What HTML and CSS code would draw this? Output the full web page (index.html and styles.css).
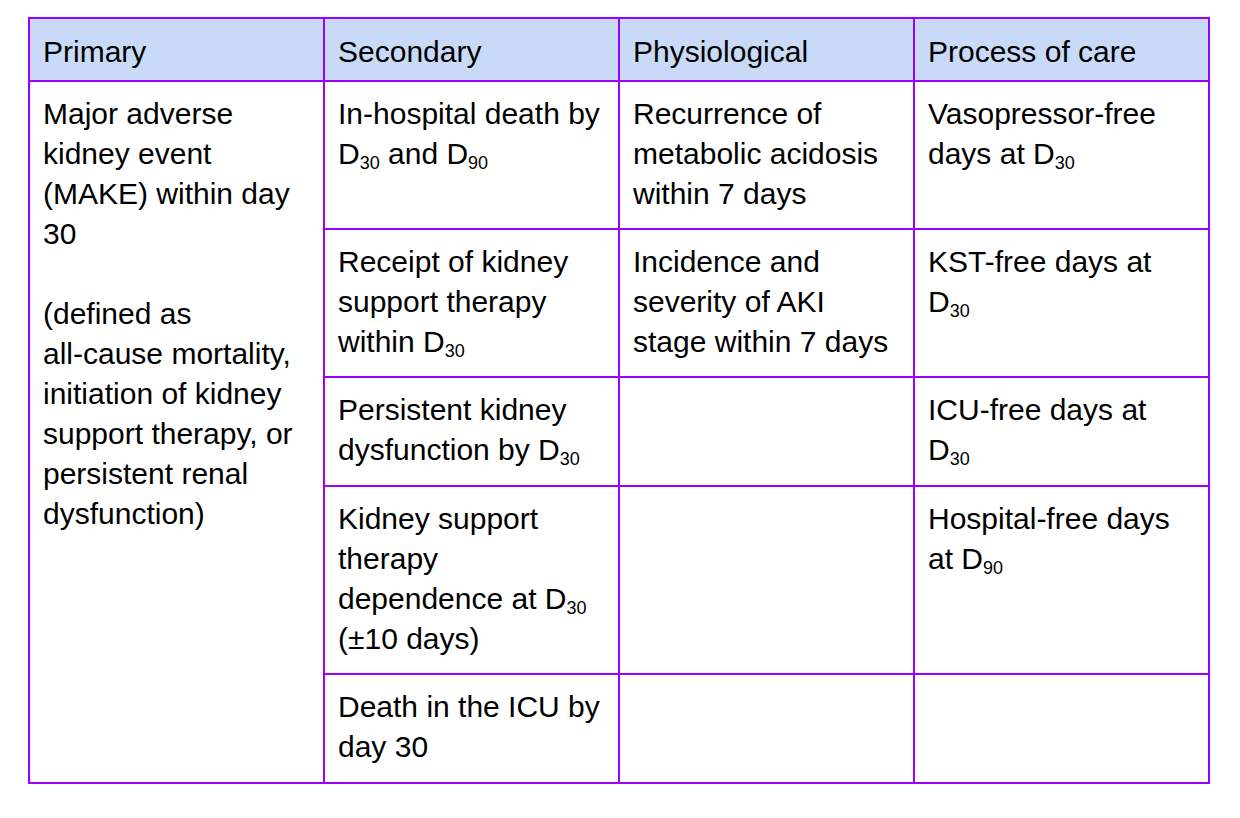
FILE: index.html
```html
<!DOCTYPE html>
<html lang="en">
<head>
<meta charset="utf-8">
<title>Outcomes</title>
<link rel="stylesheet" href="styles.css">
</head>
<body>
<table class="outcomes">
  <thead>
    <tr class="r-head">
      <th>Primary</th>
      <th>Secondary</th>
      <th>Physiological</th>
      <th>Process of care</th>
    </tr>
  </thead>
  <tbody>
    <tr class="r1">
      <td rowspan="5">
        <div>Major adverse kidney event (MAKE) within day 30</div>
        <div class="para">(defined as <span class="nowrap">all-cause</span> mortality, initiation of kidney support therapy, or persistent renal dysfunction)</div>
      </td>
      <td>In-hospital death by D<sub class="sub">30</sub> and D<sub class="sub">90</sub></td>
      <td>Recurrence of metabolic acidosis within 7 days</td>
      <td>Vasopressor-free days at D<sub class="sub">30</sub></td>
    </tr>
    <tr class="r2">
      <td>Receipt of kidney support therapy within D<sub class="sub">30</sub></td>
      <td>Incidence and severity of AKI stage within 7 days</td>
      <td>KST-free days at D<sub class="sub">30</sub></td>
    </tr>
    <tr class="r3">
      <td>Persistent kidney dysfunction by D<sub class="sub">30</sub></td>
      <td></td>
      <td>ICU-free days at D<sub class="sub">30</sub></td>
    </tr>
    <tr class="r4">
      <td>Kidney support therapy dependence at D<sub class="sub">30</sub> (±10 days)</td>
      <td></td>
      <td>Hospital-free days at D<sub class="sub">90</sub></td>
    </tr>
    <tr class="r5">
      <td>Death in the ICU by day 30</td>
      <td></td>
      <td></td>
    </tr>
  </tbody>
</table>
</body>
</html>
```
FILE: styles.css
```css
html, body {
  margin: 0;
  padding: 0;
  background: #ffffff;
}
body {
  padding: 17px 0 0 28px;
  font-family: "Liberation Sans", Arial, Helvetica, sans-serif;
  color: #000000;
}
.outcomes {
  border-collapse: separate;
  border-spacing: 0;
  table-layout: fixed;
  width: 1182px;
  border-top: 2px solid #9900ff;
  border-left: 2px solid #9900ff;
  font-size: 30px;
  line-height: 40px;
}
.outcomes th,
.outcomes td {
  border-right: 2px solid #9900ff;
  border-bottom: 2px solid #9900ff;
  vertical-align: top;
  text-align: left;
  font-weight: normal;
  padding: 12px 15px 0 13px;
  box-sizing: border-box;
}
.outcomes th {
  background: #c9daf8;
  padding-top: 13px;
}
.r-head { height: 63px; }
.r1 { height: 148px; }
.r2 { height: 148px; }
.r3 { height: 109px; }
.r4 { height: 188px; }
.r5 { height: 109px; }
.para {
  margin-top: 40px;
}
.nowrap {
  white-space: nowrap;
}
.sub {
  font-size: 18px;
  line-height: 18px;
  vertical-align: -5px;
}
```
